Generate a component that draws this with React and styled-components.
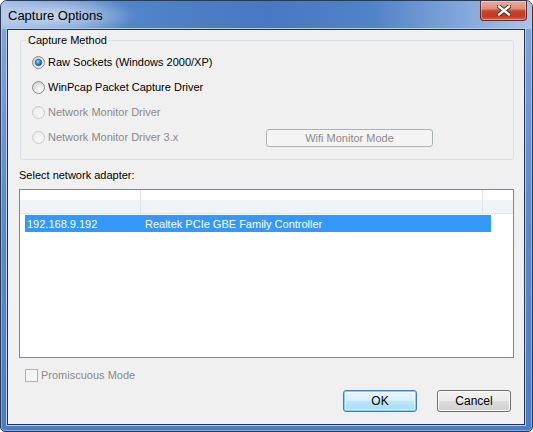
import React from "react";
import styled, { createGlobalStyle } from "styled-components";

const Global = createGlobalStyle`
  html, body { margin: 0; padding: 0; background: #ffffff; }
  #root { width: 533px; height: 432px; }
`;

const Window = styled.div`
  width: 533px;
  height: 432px;
  box-sizing: border-box;
  border: 1px solid #2b3a52;
  border-radius: 7px 7px 5px 5px;
  overflow: hidden;
  display: flex;
  flex-direction: column;
  background: linear-gradient(180deg, #86a8da 0%, #5d8bcb 45%, #4b7cc4 100%);
  box-shadow: inset 0 0 0 1px rgba(255, 255, 255, 0.35);
  font-family: "Liberation Sans", Arial, sans-serif;
  font-size: 11px;
  color: #000;
`;

const TitleBar = styled.div`
  height: 28px;
  flex: none;
  display: flex;
  align-items: center;
  padding: 0 5px 0 7px;
  background:
    radial-gradient(ellipse 110px 26px at 55px 15px, rgba(255, 255, 255, 0.6), rgba(255, 255, 255, 0) 75%),
    linear-gradient(90deg, #a4c0e6 0%, #7ea3d8 8%, #5284c8 24%, #4878c1 50%, #5183c7 70%, #86a9dc 88%, #a9c4e8 100%);
`;

const Title = styled.span`
  font-size: 13px;
  line-height: 16px;
  margin-top: 2px;
  color: #000;
`;

const CloseButton = styled.div`
  margin-left: auto;
  align-self: flex-start;
  width: 47px;
  height: 20px;
  box-sizing: border-box;
  border: 1px solid #6a2a24;
  border-top: none;
  border-radius: 0 0 4px 4px;
  display: flex;
  align-items: center;
  justify-content: center;
  background: linear-gradient(180deg, #e8ab9c 0%, #dc8f7e 40%, #c8452f 52%, #c03a28 80%, #d8674b 100%);
  box-shadow: inset 0 0 0 1px rgba(255, 255, 255, 0.35);
`;

const Client = styled.div`
  flex: 1;
  margin: 0 7px 6px 6px;
  box-sizing: border-box;
  border: 1px solid #1d3250;
  box-shadow: 0 0 0 1px #b9cdea;
  background: #f0f0f0;
  display: flex;
  flex-direction: column;
`;

const Group = styled.fieldset`
  margin: 4px 10px 0 12px;
  padding: 3px 0 9px 0;
  min-width: 0;
  border: 1px solid #d5dfe5;
  border-radius: 3px;
`;

const Legend = styled.legend`
  margin-left: 5px;
  padding: 0 2px;
  line-height: 13px;
  color: #000;
`;

const RadioRow = styled.div`
  height: 25px;
  display: flex;
  align-items: center;
  padding-left: 11px;
`;

const RadioOption = styled.div`
  display: flex;
  align-items: center;
  gap: 3px;
  width: ${(p) => p.$width || "auto"};
  color: ${(p) => (p.$disabled ? "#8a8a8a" : "#000")};
  line-height: 13px;
`;

const FlatButton = styled.div`
  width: 167px;
  height: 18px;
  box-sizing: border-box;
  border: 1px solid #adb2b5;
  border-radius: 3px;
  background: #f4f4f4;
  color: #8a8a8a;
  display: flex;
  align-items: center;
  justify-content: center;
`;

const Caption = styled.div`
  margin: 9px 0 0 11px;
  line-height: 13px;
`;

const List = styled.div`
  margin: 7px 10px 0 11px;
  height: 169px;
  box-sizing: border-box;
  border: 1px solid #828790;
  background: #fff;
  display: flex;
  flex-direction: column;
`;

const Header = styled.div`
  display: flex;
  height: 24px;
  box-sizing: border-box;
  border-bottom: 1px solid #e5e6e8;
  background: linear-gradient(180deg, #ffffff 0px, #ffffff 10px, #f2f3f5 10px, #f2f3f5 100%);
`;

const HeaderCell = styled.div`
  width: ${(p) => p.$width || "auto"};
  flex: ${(p) => (p.$width ? "none" : "1")};
  box-sizing: border-box;
  border-right: ${(p) => (p.$last ? "none" : "1px solid #e1e3e6")};
`;

const Row = styled.div`
  margin: 1px 0 0 5px;
  width: 466px;
  height: 17px;
  display: flex;
  align-items: center;
  background: ${(p) => (p.$selected ? "#3399ff" : "transparent")};
  color: ${(p) => (p.$selected ? "#fff" : "#000")};
`;

const Cell = styled.div`
  width: ${(p) => p.$width || "auto"};
  flex: ${(p) => (p.$width ? "none" : "1")};
  box-sizing: border-box;
  padding-left: ${(p) => p.$pad || "0px"};
  white-space: nowrap;
`;

const CheckRow = styled.div`
  margin: 11px 0 0 17px;
  display: flex;
  align-items: center;
  gap: 3px;
  line-height: 13px;
  color: #8a8a8a;
`;

const CheckBox = styled.div`
  width: 13px;
  height: 13px;
  box-sizing: border-box;
  border: 1px solid #b1b1b1;
  background: linear-gradient(135deg, #f0f0f0, #fafafa);
  box-shadow: inset 0 0 0 1px #f4f4f4;
`;

const ButtonBar = styled.div`
  margin-top: 8px;
  padding-right: 13px;
  display: flex;
  justify-content: flex-end;
  gap: 20px;
`;

const DialogButton = styled.div`
  width: 74px;
  height: 22px;
  box-sizing: border-box;
  border-radius: 3px;
  display: flex;
  align-items: center;
  justify-content: center;
  font-size: 12px;
  color: #000;
  border: 1px solid ${(p) => (p.$default ? "#3c7fb1" : "#707070")};
  background: ${(p) =>
    p.$default
      ? "linear-gradient(180deg, #e9f6fd 0%, #d8effb 48%, #bde5fb 52%, #a9daf6 100%)"
      : "linear-gradient(180deg, #f2f2f2 0%, #ebebeb 48%, #dddddd 52%, #cfcfcf 100%)"};
  box-shadow: ${(p) =>
    p.$default
      ? "inset 0 0 0 1px #7fd0f5, inset 0 0 0 2px rgba(255,255,255,0.5)"
      : "inset 0 0 0 1px #fcfcfc"};
`;

function Radio({ checked, disabled }) {
  const stroke = disabled ? "#c8c8c8" : "#8a8c8e";
  return (
    <svg width="13" height="13" viewBox="0 0 13 13">
      <defs>
        <radialGradient id={disabled ? "rfD" : "rfE"} cx="0.65" cy="0.7" r="0.7">
          <stop offset="0" stopColor={disabled ? "#f7f7f7" : "#ffffff"} />
          <stop offset="1" stopColor={disabled ? "#ececec" : "#d4d4d4"} />
        </radialGradient>
        <radialGradient id="rdot" cx="0.4" cy="0.35" r="0.7">
          <stop offset="0" stopColor="#9fdcff" />
          <stop offset="0.5" stopColor="#2b8ae0" />
          <stop offset="1" stopColor="#0d4d94" />
        </radialGradient>
      </defs>
      <circle cx="6.5" cy="6.5" r="6" fill={`url(#${disabled ? "rfD" : "rfE"})`} stroke={stroke} strokeWidth="1" />
      {checked && <circle cx="6.5" cy="6.5" r="3.3" fill="url(#rdot)" stroke="#1a4f88" strokeWidth="0.6" />}
    </svg>
  );
}

function CloseGlyph() {
  return (
    <svg width="14" height="11" viewBox="0 0 14 11">
      <path d="M2 1.5 L12 9.5 M12 1.5 L2 9.5" stroke="#4d1c16" strokeWidth="4.2" strokeLinecap="square" />
      <path d="M2 1.5 L12 9.5 M12 1.5 L2 9.5" stroke="#ffffff" strokeWidth="2.4" strokeLinecap="square" />
    </svg>
  );
}

const options = [
  { label: "Raw Sockets (Windows 2000/XP)", checked: true },
  { label: "WinPcap Packet Capture Driver" },
  { label: "Network Monitor Driver", disabled: true },
];

export default function App() {
  return (
    <>
      <Global />
      <Window>
        <TitleBar>
          <Title>Capture Options</Title>
          <CloseButton>
            <CloseGlyph />
          </CloseButton>
        </TitleBar>
        <Client>
          <Group>
            <Legend>Capture Method</Legend>
            {options.map((o) => (
              <RadioRow key={o.label}>
                <RadioOption $disabled={o.disabled}>
                  <Radio checked={o.checked} disabled={o.disabled} />
                  <span>{o.label}</span>
                </RadioOption>
              </RadioRow>
            ))}
            <RadioRow>
              <RadioOption $disabled $width="234px">
                <Radio disabled />
                <span>Network Monitor Driver 3.x</span>
              </RadioOption>
              <FlatButton>Wifi Monitor Mode</FlatButton>
            </RadioRow>
          </Group>
          <Caption>Select network adapter:</Caption>
          <List>
            <Header>
              <HeaderCell $width="121px" />
              <HeaderCell $width="342px" />
              <HeaderCell $last />
            </Header>
            <Row $selected>
              <Cell $width="120px" $pad="2px">192.168.9.192</Cell>
              <Cell>Realtek PCIe GBE Family Controller</Cell>
            </Row>
          </List>
          <CheckRow>
            <CheckBox />
            <span>Promiscuous Mode</span>
          </CheckRow>
          <ButtonBar>
            <DialogButton $default>OK</DialogButton>
            <DialogButton>Cancel</DialogButton>
          </ButtonBar>
        </Client>
      </Window>
    </>
  );
}
